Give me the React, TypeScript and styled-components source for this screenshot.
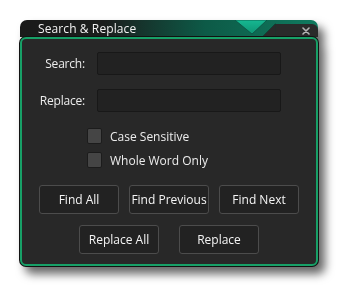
import React from "react";
import styled, { createGlobalStyle } from "styled-components";

const GlobalStyle = createGlobalStyle`
  html, body {
    margin: 0;
    padding: 0;
    background: #ffffff;
    font-family: "Open Sans", "Liberation Sans", sans-serif;
  }
`;

const Page = styled.div`
  width: 339px;
  height: 287px;
  padding: 20px 0 0 20px;
  box-sizing: border-box;
`;

const Window = styled.div`
  width: 298px;
  display: flex;
  flex-direction: column;
  filter: drop-shadow(6px 7px 5px rgba(0, 0, 0, 0.6));
`;

const TitleBar = styled.div`
  height: 17px;
  display: flex;
  border-radius: 7px 7px 0 0;
  overflow: hidden;
  background: linear-gradient(90deg, #1a1a1a 0%, #1b1d1c 28%, #0d5a47 62%, #107a5f 100%);
`;

const Title = styled.div`
  flex: 1;
  padding-left: 18px;
  color: #f2f2f2;
  font-size: 12px;
  line-height: 18px;
  letter-spacing: 0.1px;
  white-space: nowrap;
`;

const Notch = styled.svg`
  display: block;
  flex: none;
`;

const CloseArea = styled.div`
  width: 42px;
  margin-top: 4px;
  background: #2a2a2a;
  border-top-right-radius: 6px;
  display: flex;
  align-items: center;
  justify-content: flex-end;
  padding: 1px 8px 0 0;
  box-sizing: border-box;
`;

const Panel = styled.div`
  height: 229px;
  box-sizing: border-box;
  background: #282828;
  border: 2px solid #17a067;
  border-radius: 6px;
  box-shadow: 0 0 0 1px #121212;
  display: flex;
  flex-direction: column;
`;

const Form = styled.div`
  display: grid;
  grid-template-columns: 63px 184px;
  column-gap: 12px;
  row-gap: 14px;
  margin-top: 13px;
  align-items: center;
`;

const Label = styled.label`
  text-align: right;
  color: #ececec;
  font-size: 12px;
  letter-spacing: -0.2px;
`;

const Field = styled.input`
  height: 23px;
  box-sizing: border-box;
  background: #222222;
  border: 1px solid #181818;
  border-radius: 2px;
  outline: none;
  color: #e8e8e8;
  padding: 0 6px;
  font-family: inherit;
  font-size: 12px;
`;

const Options = styled.div`
  display: flex;
  flex-direction: column;
  gap: 8px;
  margin: 16px 0 0 65px;
`;

const Option = styled.label`
  display: flex;
  align-items: center;
  gap: 8px;
  color: #ececec;
  font-size: 12px;
  height: 16px;
`;

const Box = styled.span`
  width: 15px;
  height: 16px;
  box-sizing: border-box;
  background: #454545;
  border: 1px solid #1c1c1c;
  border-radius: 2px;
`;

const ButtonRow = styled.div<{ $gap: number; $top: number }>`
  display: flex;
  justify-content: center;
  gap: ${(p) => p.$gap}px;
  margin-top: ${(p) => p.$top}px;
`;

const Button = styled.button`
  width: 80px;
  height: 29px;
  box-sizing: border-box;
  background: #222222;
  border: 1px solid #4c4c4c;
  border-radius: 3px;
  color: #f4f4f4;
  font-family: inherit;
  font-size: 12px;
  padding: 0 0 1px;
  white-space: nowrap;
`;

export default function App() {
  return (
    <Page>
      <GlobalStyle />
      <Window>
        <TitleBar>
          <Title>Search &amp; Replace</Title>
          <Notch width="43" height="17" viewBox="0 0 43 17">
            <defs>
              <linearGradient id="tri" x1="0" y1="0" x2="0" y2="1">
                <stop offset="0" stopColor="#16b892" />
                <stop offset="1" stopColor="#0e9473" />
              </linearGradient>
            </defs>
            <polygon points="2,0 34,0 19,14" fill="url(#tri)" stroke="#0a5243" strokeWidth="0.8" />
            <polygon points="42,4 43,4 43,17 29,17" fill="#2a2a2a" stroke="#0a3d31" strokeWidth="0.6" />
          </Notch>
          <CloseArea>
            <svg width="8" height="8" viewBox="0 0 8 8">
              <path d="M1 1 L7 7 M7 1 L1 7" stroke="#b4b4b4" strokeWidth="1.6" strokeLinecap="round" />
            </svg>
          </CloseArea>
        </TitleBar>
        <Panel>
          <Form>
            <Label>Search:</Label>
            <Field />
            <Label>Replace:</Label>
            <Field />
          </Form>
          <Options>
            <Option>
              <Box />
              Case Sensitive
            </Option>
            <Option>
              <Box />
              Whole Word Only
            </Option>
          </Options>
          <ButtonRow $gap={10} $top={17}>
            <Button>Find All</Button>
            <Button>Find Previous</Button>
            <Button>Find Next</Button>
          </ButtonRow>
          <ButtonRow $gap={20} $top={11}>
            <Button>Replace All</Button>
            <Button>Replace</Button>
          </ButtonRow>
        </Panel>
      </Window>
    </Page>
  );
}
